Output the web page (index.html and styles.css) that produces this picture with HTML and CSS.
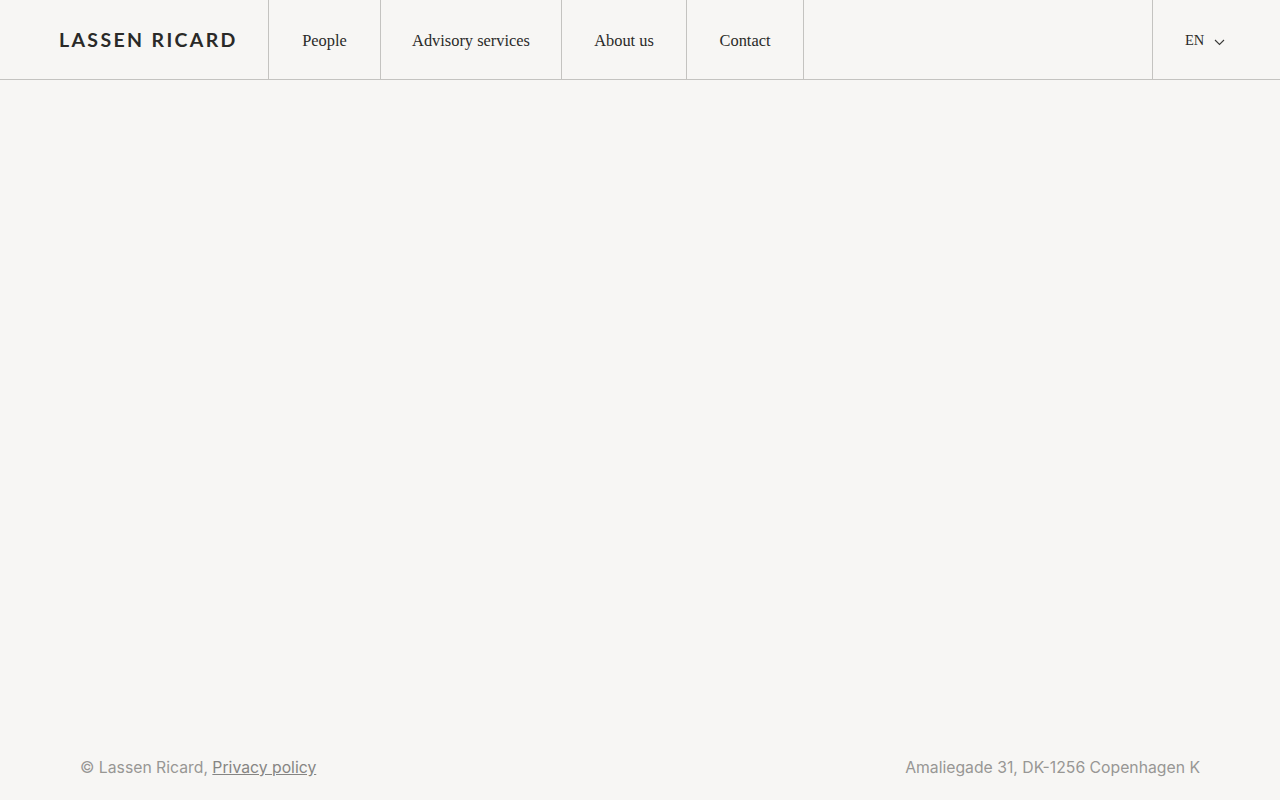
FILE: index.html
```html
<!DOCTYPE html>
<html lang="en">
<head>
    <meta charset="UTF-8">
    <meta name="viewport" content="width=device-width, initial-scale=1.0">
    <title>Lassen Ricard</title>
    <link rel="stylesheet" href="styles.css">
</head>
<body>
    <header class="header">
        <a class="logo" href="#">LASSEN RICARD</a>
        <nav class="nav">
            <a class="nav-item" href="#">People</a>
            <a class="nav-item" href="#">Advisory services</a>
            <a class="nav-item" href="#">About us</a>
            <a class="nav-item" href="#">Contact</a>
        </nav>
        <div class="lang">
            <span>EN</span>
            <svg class="chevron" width="11" height="7" viewBox="0 0 11 7"><path d="M1 1l4.500 4.500L10 1" fill="none" stroke="#3a3a38" stroke-width="1.100"/></svg>
        </div>
    </header>
    <main class="main"></main>
    <footer class="footer">
        <div>© Lassen Ricard, <a href="#">Privacy policy</a></div>
        <div>Amaliegade 31, DK-1256 Copenhagen K</div>
    </footer>
</body>
</html>
```

FILE: styles.css
```css
body {
    margin: 0;
    height: 100vh;
    display: flex;
    flex-direction: column;
    background: #f7f6f4;
    overflow: hidden;
}
.header {
    height: 79px;
    display: flex;
    border-bottom: 1px solid #c4c3c0;
}
.logo {
    width: 209px;
    padding-left: 59px;
    display: flex;
    align-items: center;
    font-family: "Lato", sans-serif;
    font-size: 19.5px;
    font-weight: 700;
    letter-spacing: 2.35px;
    color: #2a2a28;
    text-decoration: none;
    white-space: nowrap;
}
.nav {
    display: grid;
    grid-template-columns: 112px 181px 125px 117px;
    border-left: 1px solid #c4c3c0;
}
.nav-item {
    display: flex;
    align-items: center;
    justify-content: center;
    padding-top: 2px;
    border-right: 1px solid #c4c3c0;
    font-family: "Liberation Serif", serif;
    font-size: 16.4px;
    color: #2a2a28;
    text-decoration: none;
}
.lang {
    margin-left: auto;
    box-sizing: border-box;
    width: 128px;
    display: flex;
    align-items: center;
    gap: 10px;
    padding: 2px 0 0 32px;
    border-left: 1px solid #c4c3c0;
    font-family: "Liberation Serif", serif;
    font-size: 14.5px;
    color: #2a2a28;
}
.chevron {
    margin-top: 3px;
}
.main {
    flex: 1;
}
.footer {
    display: flex;
    justify-content: space-between;
    padding: 0 80px 21px;
    font-family: "Inter", sans-serif;
    font-size: 15.75px;
    line-height: 22px;
    color: #989794;
}
.footer a {
    color: #868583;
}
```
